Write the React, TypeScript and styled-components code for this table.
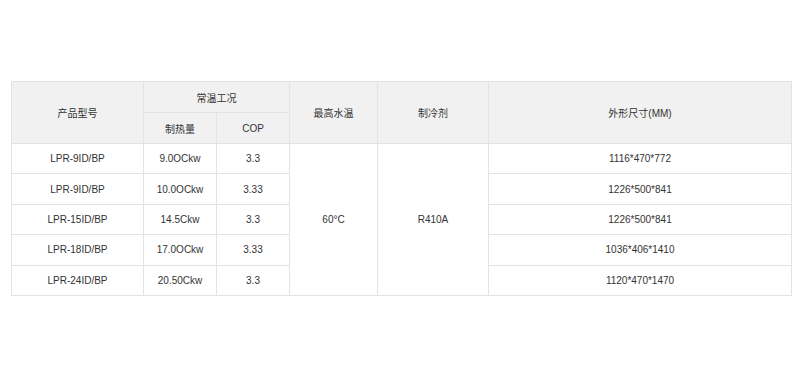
import styled, { createGlobalStyle } from 'styled-components';

const GlobalStyle = createGlobalStyle`
  html, body {
    margin: 0;
    padding: 0;
    background: #fff;
  }
`;

const rows = [
  { model: 'LPR-9ID/BP', heat: '9.0OCkw', cop: '3.3', size: '1116*470*772' },
  { model: 'LPR-9ID/BP', heat: '10.0OCkw', cop: '3.33', size: '1226*500*841' },
  { model: 'LPR-15ID/BP', heat: '14.5Ckw', cop: '3.3', size: '1226*500*841' },
  { model: 'LPR-18ID/BP', heat: '17.0OCkw', cop: '3.33', size: '1036*406*1410' },
  { model: 'LPR-24ID/BP', heat: '20.50Ckw', cop: '3.3', size: '1120*470*1470' },
];

function App() {
  return (
    <Page>
      <GlobalStyle />
      <Table>
        <colgroup>
          <col style={{ width: 132 }} />
          <col style={{ width: 73 }} />
          <col style={{ width: 73 }} />
          <col style={{ width: 88 }} />
          <col style={{ width: 111 }} />
          <col style={{ width: 303 }} />
        </colgroup>
        <thead>
          <HeadRow>
            <Th rowSpan={2}>产品型号</Th>
            <Th colSpan={2}>常温工况</Th>
            <Th rowSpan={2}>最高水温</Th>
            <Th rowSpan={2}>制冷剂</Th>
            <Th rowSpan={2}>外形尺寸(MM)</Th>
          </HeadRow>
          <HeadRow>
            <Th>制热量</Th>
            <Th>COP</Th>
          </HeadRow>
        </thead>
        <tbody>
          {rows.map((r, i) => (
            <BodyRow key={i}>
              <Td>{r.model}</Td>
              <Td>{r.heat}</Td>
              <Td>{r.cop}</Td>
              {i === 0 && (
                <>
                  <Td rowSpan={rows.length}>60°C</Td>
                  <Td rowSpan={rows.length}>R410A</Td>
                </>
              )}
              <Td>{r.size}</Td>
            </BodyRow>
          ))}
        </tbody>
      </Table>
    </Page>
  );
}

const Page = styled.div`
  padding: 81px 9px 0 11px;
  font-family: 'Liberation Sans', 'Noto Sans CJK SC', sans-serif;
  font-size: 10px;
  color: #333;
`;

const Table = styled.table`
  width: 780px;
  border-collapse: collapse;
  table-layout: fixed;
`;

const HeadRow = styled.tr`
  height: 31px;
`;

const BodyRow = styled.tr`
  height: 30.4px;
`;

const Th = styled.th`
  background: #f1f1f1;
  border: 1px solid #e3e3e3;
  font-weight: normal;
  text-align: center;
  padding: 0;
`;

const Td = styled.td`
  border: 1px solid #e3e3e3;
  text-align: center;
  padding: 0;
`;

export default App;
